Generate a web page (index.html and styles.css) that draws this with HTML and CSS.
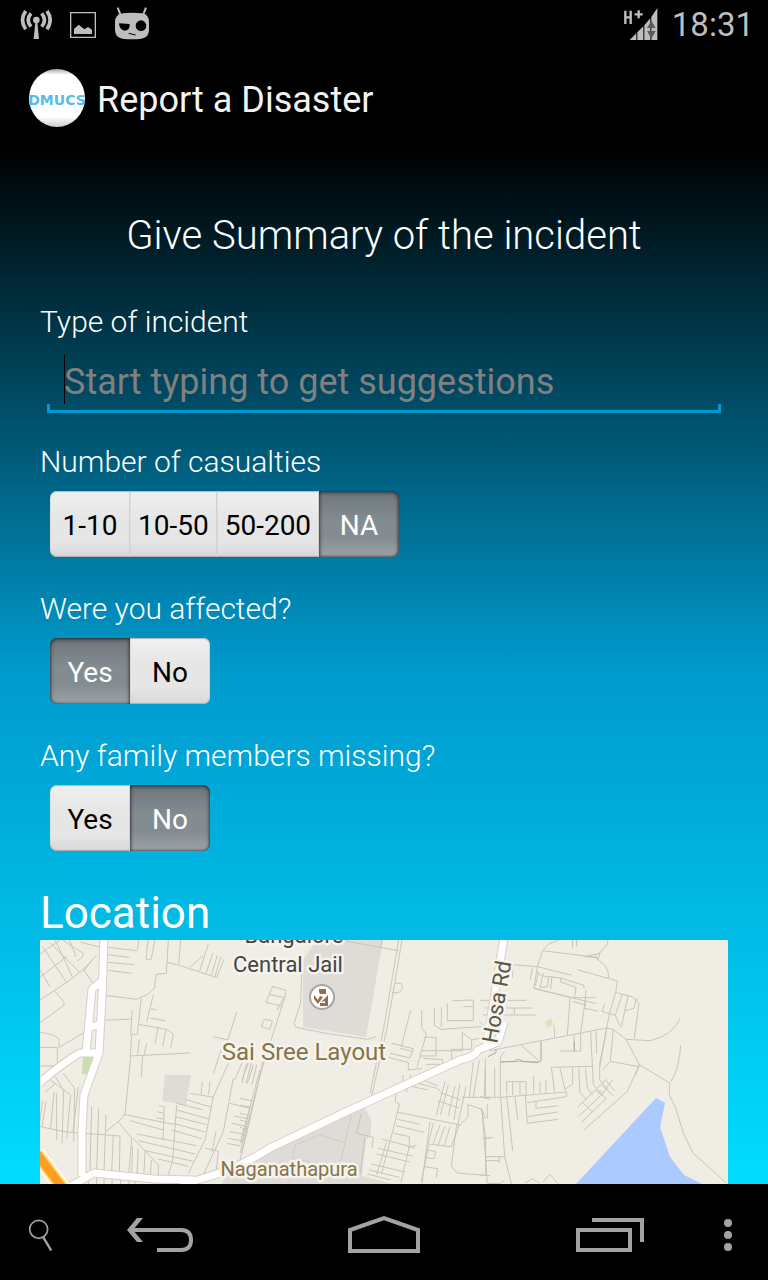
FILE: index.html
```html
<!DOCTYPE html>
<html lang="en">
<head>
<meta charset="utf-8">
<meta name="viewport" content="width=device-width, initial-scale=1">
<title>Report a Disaster</title>
<link rel="stylesheet" href="styles.css">
</head>
<body>
<div class="status-bar">
  <div class="status-icons">
    <svg width="32" height="30" viewBox="60 32 96 90" aria-hidden="true">
      <circle cx="109" cy="62" r="10" fill="#bebebe"/>
      <path d="M106 68h6l5 51h-16z" fill="#bebebe"/>
      <path d="M93 42q-17 20 0 40M77 35q-19 27 0 55M125 42q17 20 0 40M141 35q19 27 0 55" fill="none" stroke="#bebebe" stroke-width="11"/>
    </svg>
    <svg width="26" height="26" viewBox="213 36 78 78" aria-hidden="true">
      <path d="M215 38h74v74h-74z" fill="none" stroke="#bebebe" stroke-width="4"/>
      <path d="M225 102V87l14-13 17 14 11-7 12 8v13z" fill="#bebebe"/>
    </svg>
    <svg width="36" height="33" viewBox="342 26 108 99" overflow="visible" aria-hidden="true">
      <path d="M353 22l8 20M438 22l-8 20" stroke="#bebebe" stroke-width="6"/>
      <path d="M369 39q27-4 56 0 22 4 22 26v24q0 22-22 26-29 4-58 0-22-4-22-26V65q0-22 24-26z" fill="#bebebe"/>
      <path d="M357 69l32 2q1 20-16 20-15-2-16-22z" fill="#000"/>
      <circle cx="423" cy="76" r="16" fill="#000"/>
      <path d="M386 99l21 5" stroke="#000" stroke-width="3"/>
    </svg>
  </div>
  <div class="status-right">
    <svg width="35" height="35" viewBox="80 24 105 105" overflow="visible" aria-hidden="true">
      <path d="M87 32v40M103 32v40M87 52h16M115 43h24M127 31v24" stroke="#bebebe" stroke-width="7" fill="none"/>
      <path d="M100 120l20-20v20zM123 97l18-18v41h-18zM144 76l18-21v65h-18zM165 51l18-27v96h-18z" fill="#bebebe"/>
      <path d="M152 84l13-22 13 22zM152 93h26l-13 24z" fill="#5c5c5c"/>
    </svg>
    <time class="clock">18:31</time>
  </div>
</div>

<header class="action-bar">
  <svg class="logo" width="58" height="60" viewBox="0 0 58 60" aria-hidden="true">
    <defs>
      <linearGradient id="disc" x1="0" y1="0" x2="0" y2="1">
        <stop offset="0" stop-color="#aaa"/><stop offset=".1" stop-color="#fff"/>
        <stop offset=".82" stop-color="#fff"/><stop offset="1" stop-color="#ccc"/>
      </linearGradient>
    </defs>
    <ellipse cx="29" cy="30" rx="28" ry="29" fill="url(#disc)"/>
    <text class="logo-text" x="29" y="37" text-anchor="middle">DMUCS</text>
  </svg>
  <h1 class="app-title">Report a Disaster</h1>
</header>

<main class="report">
  <h2 class="summary">Give Summary of the incident</h2>
  <div class="group group-text">
    <label class="caption" for="type">Type of incident</label>
    <input class="type-input" id="type" type="text" placeholder="Start typing to get suggestions">
  </div>
  <fieldset class="group">
    <legend class="caption">Number of casualties</legend>
    <div class="segments">
      <label class="segment"><input type="radio" name="casualties"><span>1-10</span></label>
      <label class="segment"><input type="radio" name="casualties"><span>10-50</span></label>
      <label class="segment"><input type="radio" name="casualties"><span>50-200</span></label>
      <label class="segment"><input type="radio" name="casualties" checked><span>NA</span></label>
    </div>
  </fieldset>
  <fieldset class="group">
    <legend class="caption">Were you affected?</legend>
    <div class="segments">
      <label class="segment"><input type="radio" name="affected" checked><span>Yes</span></label>
      <label class="segment"><input type="radio" name="affected"><span>No</span></label>
    </div>
  </fieldset>
  <fieldset class="group">
    <legend class="caption">Any family members missing?</legend>
    <div class="segments">
      <label class="segment"><input type="radio" name="missing"><span>Yes</span></label>
      <label class="segment"><input type="radio" name="missing" checked><span>No</span></label>
    </div>
  </fieldset>
  <h2 class="location">Location</h2>
  <div class="map">
    <svg class="map-canvas" viewBox="0 0 688 244" preserveAspectRatio="xMinYMin slice" role="img" aria-label="Map">
      <!-- areas -->
      <path d="M277 0h66l-17 97-63-10V20z" fill="#dfdbd6"/>
      <path d="M125 135h26l-5 30-24-4z" fill="#dfdbd6"/>
      <path d="M190 232l50-25 83-42 8 14v16l-5 5-4 36 38 10H180z" fill="#dfdbd6"/>
      <path d="M43 115l10-1-2 20h-9zM17 124q8-9 16-10l-14 10z" fill="#c9dfaf"/>
      <path d="M505 82l6-4 2 6-5 4z" fill="#e8ddb5"/>
      <path d="M536 244l80-86 9 5-5 24 10 30 14 18 18 9z" fill="#abcaff"/>
      <!-- west streets -->
      <g class="street" transform="translate(-10 -10) scale(.33333)">
        <path d="M30 72l60-42M30 142l80-62M30 210l82-54 48-38 40-42M30 278l72-52v-10l-30-36M38 50l70 105M75 30l52 110M60 38l90 90M98 30l62 40-4 12-14 12M118 30l20 50M150 36l68 18M160 118l30 44M30 120l30 50M185 92l-25 32"/>
        <path d="M232 52l88 10M232 74l66 8M232 97l80 7M232 121l74 9M322 62l4-32M354 30l-6 57 15 3 12-60M415 30l-6 100-30 3-6 42-20 18-33 15-95-12M452 30l-6 72M410 97l35 8 115 38 22-55M535 42l-26 80M480 112l38-34M548 70l-20 60M562 76l-18 60M573 80l-18 60"/>
        <path d="M220 271l85-4M307 240l-5 73h20l12-110M305 313l-5 90-15 150-20 22-38 30M370 195l-20 80M362 236l18 4M360 264l45 8M325 283l85 15 20 14-8 40M384 294l-9 47M408 298l-10 51M300 378l180-9M328 328l-5 45M350 340l-8 35M338 376l-4 65"/>
        <path d="M30 306l42 10 15 12v24M30 352h52v56H30M88 352l76-46M62 450l60 45-12 130M45 486l30-24M76 440l25 42-5 160M100 430l34 45-3 160M72 486l-10 110M80 490v140M48 515l-12 75M38 512l-8 60M145 470l-16 140M30 590l80 16 160 12-2 120M185 530l-5 190M206 535l-6 190M228 555l-6 170M250 615l-5 110"/>
        <path d="M280 553l150 30M300 572l100 28M320 612l180 35M310 625l75 80v30M325 632l170 40M345 662l145 32M385 687l90 22M265 575l40 50-10 120M308 650l-4 100M325 655l-4 80M345 665l-4 80M364 690l-4 60M403 530l-4 98M440 525l-12 165-14 48M387 527l18 5M382 545l20 5M380 563l20 5M440 540l100 28M435 560l95 24M430 580l95 26M425 600l90 26M440 520l80 20M465 508l80 24M480 490l72 12"/>
        <path d="M620 246l-26 84-44-10M580 340l-30 90M595 400l-45 100-25 130-50 100M610 445l-30 160-60 130M640 390l-26 60M655 400l-20 50M670 405l-18 55M600 520l60 15M612 558l42 8M605 580l48 10M600 605l45 8M595 625l45 8M590 640l42 8M700 390l-55 240-15 60M680 480l-45 190M660 530l-25 110M525 655l40 8-8 80M517 455l-4 40M540 455l-4 40M558 605l-12 60M175 745v20M200 742v20M222 742v20M246 745v20M272 745v20M297 745v20M315 750v20"/>
      </g>
      <!-- central streets -->
      <g class="street" transform="translate(200 -10) scale(.33333)">
        <path d="M186 100l-4 120-20 60 6 12 90 18 125 18 26-8M300 30l175 32M486 30l-44 260-46 204M476 30l-44 260-42 200M426 30l-4 22M98 169l40 12-4 18-24 42M98 169l-20 48 50 12M90 194l40 8M73 268l24 5-8 26-25-10zM135 199l-70 220-65 250M60 420l-60 220M20 400l-14 60M34 400l-16 60M50 404l-14 60M0 505l38 8M0 525l34 8M0 550l26 6M0 570l22 6M0 592l20 6"/>
        <path d="M466 160h18q10 20-10 28h-18M512 240l-28 110M545 240v54l14 18-28 100M480 355l40 10M455 340l65 16-10 28-60-14M445 382l60 16v22l42-5M604 232v58M583 232v54l20 12 90-6 32-2M622 220v52h78v-62l-62 2M670 230h30M550 322h38v56h-50M545 362h122v-54l28 22v28h-60v42M550 385l58 4v14h-50M694 330l30-6"/>
        <path d="M468 490l-2 26 12 6-14 60-40 150M475 547l185 38 24-25v-36l42 14 8 22M472 568l70 15M468 587l85 20M462 610l46 10v32l22-7M425 627l50 13 50 14M415 655l104 24M410 672l100 24M394 702l100 24M388 720l90 22M382 732l70 18M490 435l-5 46M513 432l-14 55M470 460l95 20M516 455l75 20 10 8M545 448l50 20M615 455l-26 100M625 465l-24 90M645 468l-20 90M660 460l-18 110M678 470l-24 112M601 488l62 22M666 502h84M592 512l65 22M700 396l-12 106M718 390l-18 112M736 385v115"/>
        <path d="M570 575l-24 185M580 580l-16 62 70 8 24-66M600 585l-22 60M615 588l-22 60M630 590l-18 60M650 584l-16 125 18 20 98 8M725 535l12 90v110M350 610l50 12-4 32M375 620l-14 110M350 610l14-60M720 500l30 8M566 645l-22 110M558 660l30 4-6 22-28-4M553 710l40 6-4 28M440 635l-30 100M508 648l-25 110M728 625h22M738 680h12"/>
      </g>
      <g class="street-faint" transform="translate(200 -10) scale(.33333)"><path d="M334 555l-32 140M240 615l70 22M165 645l75-30M165 645l-8 38 90 22"/></g>
      <!-- east streets -->
      <g class="street" transform="translate(440 -10) scale(.33333)">
        <path d="M240 28l-34 14-18 20-16 48-98-8M188 62l160 20 28 26 9 20v18M278 30v25M290 30v20M383 30v12l-24 28-45 10M314 80l42 4 4-20M345 72l8 20M172 110l104 26M158 112l-8 38M98 105v38M291 119l121 34-5 35-18 60-10 50-20 115v36l25 30M172 110l-10 65 110 27M176 125l-10 42M190 130l-10 42 22-2 4-32M216 140l-4 35M172 125q10 16 30 14l40 5 70 22v10M242 144v12l46 16-4 28M162 175l112 28 75 18M272 203h75M278 214l42 12M318 180l-4 55M270 205l-8 110M316 210l-14 96M312 235l42 8M407 188l50 12 20 20-14 106M470 205l-8 30-30 8M444 198l-20 94M426 195l-20 60M374 220l-8 24 40 12 14 32"/>
        <path d="M0 211h140M15 234h143M8 255h160M103 234v20M0 275l12 12M222 285l2 38M30 362l195-38 155-30 20 4 38 30 40 76 90 54v38l18 36 24 76 28 60 100 90M438 328l72 4q65-14 90-65M602 346q-4 70-30 110M282 312v52M302 308v55h-62M332 305l8 158 25 32 32-45M348 304l2 67M380 297l-22 110M400 298l-9 96-22 24M391 394l85 16-34 74-130 116M478 402l-12 35M124 346l58 51V335M75 364l-14 16v120M184 333v60"/>
        <path d="M338 409l-124 3 10 74M240 414l16 70M278 414v48l-20 14M296 414l4 74 20 20M316 414l6 60 16 22M60 395h120M80 455h58v40M80 455v40M98 455v40M120 455v40M161 438v52M180 455v35M198 450v40M16 412l-3 88M44 412v88M0 502h60l200-16v14l-120 18M136 495l6 85 92-12M142 560l90-14M168 515v20l68-8M80 500l18 162M105 500l8 70M62 502l12 178 20 82M0 535l6 5 16 220M22 522v42H10M12 626l28-4M18 680h58M18 692h40v-12M58 692v8M0 736h18M24 760h40l8-8M135 760l22-14 22 14M190 755l20-22 25 28M292 532l88-85M295 560l74-70-10-10M303 578l76-73-30-22M308 518l30 28M365 465l34 32M378 452l26 30"/>
        <path d="M63 396l40-2 12-6 12 6 48 4M24 380l24-12v-8M283 335v28" stroke="#b3a58d"/>
      </g>
      <!-- main roads -->
      <g class="road-edge">
        <path d="M64-2l-2 60-3 55-15 42-2 35v46M62 41l-10 8-6 64M51 87l10-3M-2 144q26-22 42-31h20M20 252l34-19 60 6 40 1M140 244q50-10 90-36l80-38 110-50q15-3 18-10l20-8 6-20"/>
        <path d="M464-2l-18 110"/>
      </g>
      <g class="road">
        <path d="M64-2l-2 60-3 55-15 42-2 35v46M62 41l-10 8-6 64M51 87l10-3M-2 144q26-22 42-31h20M20 252l34-19 60 6 40 1M140 244q50-10 90-36l80-38 110-50q15-3 18-10l20-8 6-20"/>
        <path d="M464-2l-18 110"/>
      </g>
      <path d="M-3 214l27 36" stroke="#fff" stroke-width="16"/>
      <path d="M-3 214l27 36" stroke="#ffdf80" stroke-width="13"/>
      <path d="M-3 214l27 36" stroke="#ff9c22" stroke-width="9"/>
      <!-- place marker -->
      <circle cx="282" cy="57" r="12" fill="#fff" stroke="#a7a4a1" stroke-width="2"/>
      <path d="M279 49h7v5h-6l-1-2zM274 55l4 5 2-4 3 1-5 7-4-5zM281 62l7-7v11h-8v-3h5v-2z" fill="#966e4e"/>
      <g class="map-label">
        <text class="place" x="254" y="3" text-anchor="middle">Bangalore</text>
        <text class="place" x="248" y="32" text-anchor="middle">Central Jail</text>
        <text class="area" x="264" y="120" text-anchor="middle">Sai Sree Layout</text>
        <text class="town" x="249" y="236" text-anchor="middle">Naganathapura</text>
        <text class="road-name" transform="translate(457 104) rotate(-80)">Hosa Rd</text>
      </g>
    </svg>
  </div>
</main>

<nav class="nav-bar" aria-label="System">
  <button class="nav-key" aria-label="Search"><svg width="24" height="34" viewBox="28 88 72 102" overflow="visible">
    <g fill="none" stroke="#a3a3a3"><circle cx="60" cy="122" r="27" stroke-width="5"/><path d="M74 146l22 37" stroke-width="7" stroke-linecap="round"/></g></svg></button>
  <button class="nav-key" aria-label="Back"><svg width="68" height="36" viewBox="0 0 68 36">
    <path d="M4 13h51q10 0 10 10t-10 10H31" fill="none" stroke="#a3a3a3" stroke-width="4"/><path d="M1 13L11 1h6L7 13l10 12h-6z" fill="#a3a3a3"/></svg></button>
  <button class="nav-key" aria-label="Home"><svg width="72" height="40" viewBox="0 0 72 40">
    <path d="M2 36V15L36 3l34 12v21z" fill="none" stroke="#a3a3a3" stroke-width="4"/></svg></button>
  <button class="nav-key" aria-label="Recent apps"><svg width="72" height="34" viewBox="-4 0 72 34">
    <path d="M2 12h52v20H2zM16 2h50v22" fill="none" stroke="#a3a3a3" stroke-width="4"/></svg></button>
  <button class="nav-key" aria-label="Menu"><svg width="10" height="34" viewBox="0 0 10 34">
    <g fill="#a3a3a3"><circle cx="5" cy="5" r="4"/><circle cx="5" cy="17" r="4"/><circle cx="5" cy="29" r="4"/></g></svg></button>
</nav>
</body>
</html>
```
FILE: styles.css
```css
* { box-sizing: border-box; }

body {
  margin: 0;
  height: 100vh;
  display: flex;
  flex-direction: column;
  overflow: hidden;
  background: #000;
  color: #fff;
  font-family: Roboto, "Noto Sans", sans-serif;
}

svg { display: block; }

.status-bar {
  flex: none;
  height: 50px;
  padding: 0 14px 0 20px;
  display: flex;
  align-items: center;
  justify-content: space-between;
}

.status-icons { display: flex; align-items: center; gap: 18px; }
.status-right { display: flex; align-items: center; gap: 14px; }
.clock { font-size: 33px; line-height: 50px; color: #bebebe; font-weight: 400; }

.action-bar {
  flex: none;
  height: 96px;
  padding: 0 28px;
  display: flex;
  align-items: center;
  gap: 11px;
}

.logo-text { font: bold 14px "DejaVu Sans", sans-serif; fill: #55bde9; }
.app-title { margin: 0; padding-top: 4px; font-size: 36px; line-height: 44px; font-weight: 400; color: #f3f3f3; }

.report {
  flex: 1;
  min-height: 0;
  padding: 64px 40px 0;
  display: flex;
  flex-direction: column;
  background: linear-gradient(#000, #0099cc 50%, #00ddff);
}

.summary {
  margin: 0 0 42px;
  font-size: 40px;
  line-height: 52px;
  font-weight: 300;
  text-align: center;
}

.group { margin: 0 0 34px; padding: 0; border: 0; min-width: 0; }
.group-text { margin-bottom: 31px; }

.caption {
  display: block;
  padding: 0;
  margin-bottom: 11px;
  font-size: 30px;
  line-height: 36px;
  font-weight: 300;
}

.group-text { display: flex; flex-direction: column; }

/* underline with short end ticks, and the text cursor */
.type-input {
  height: 62px;
  margin: 0 7px;
  padding: 0 17px;
  border: 0;
  border-radius: 0;
  outline: 0;
  color: #fff;
  font: 400 36px Roboto, "Noto Sans", sans-serif;
  background:
    linear-gradient(#0099cc, #0099cc) left bottom / 100% 3px no-repeat,
    linear-gradient(#0099cc, #0099cc) left bottom / 3px 9px no-repeat,
    linear-gradient(#0099cc, #0099cc) right bottom / 3px 9px no-repeat,
    linear-gradient(#000, #000) 17px 4px / 1px 49px no-repeat;
}
.type-input::placeholder { color: #808080; opacity: 1; }

.segments { display: flex; margin-left: 10px; }
.segment { position: relative; display: flex; }
.segment input { position: absolute; inset: 0; margin: 0; opacity: 0; }

.segment span {
  min-width: 80px;
  height: 66px;
  padding: 0 8px;
  font-size: 28px;
  line-height: 70px;
  text-align: center;
  color: #000;
  background: linear-gradient(#f0f0f0, #e6e6e6 40%, #e6e6e6 75%, #d8d8d8);
  box-shadow: inset -1px 0 #d2d2d2, inset 0 1px 1px #b4b4b4, inset 0 -1px 1px #aaa;
}
.segment:first-child span { border-radius: 7px 0 0 7px; }
.segment:last-child span { border-radius: 0 7px 7px 0; }

.segment input:checked + span {
  color: #fff;
  background: linear-gradient(#6c757a, #838c91 45%, #838c91 70%, #9ba3a9);
  box-shadow: inset 0 1px 4px #1f2427, inset 0 0 2px #444;
}

.location {
  margin: 3px 0 2px;
  font-size: 44px;
  line-height: 50px;
  font-weight: 400;
}

.map { flex: 1; min-height: 0; background: #f0ede5; overflow: hidden; }
.map-canvas { width: 100%; height: 100%; }

.street { fill: none; stroke: #cbc4b6; stroke-width: 3; }
.street-faint { fill: none; stroke: #cfcac4; stroke-width: 3; }
.road-edge { fill: none; stroke: #d6d0c6; stroke-width: 9; stroke-linejoin: round; }
.road { fill: none; stroke: #fff; stroke-width: 7; stroke-linejoin: round; }

.map-label { paint-order: stroke; stroke: #f5f3ee; stroke-width: 5px; stroke-linejoin: round; }
.place { font-size: 22px; fill: #444; }
.area { font-size: 24px; fill: #86734a; }
.town { font-size: 20px; fill: #86734a; }
.road-name { font-size: 22px; fill: #5c5646; }

.nav-bar {
  flex: none;
  height: 96px;
  padding-top: 6px;
  display: grid;
  grid-template-columns: 5fr 10fr 18fr 10fr 5fr;
}

.nav-key {
  display: flex;
  align-items: center;
  justify-content: center;
  padding: 0;
  border: 0;
  background: none;
}
```
